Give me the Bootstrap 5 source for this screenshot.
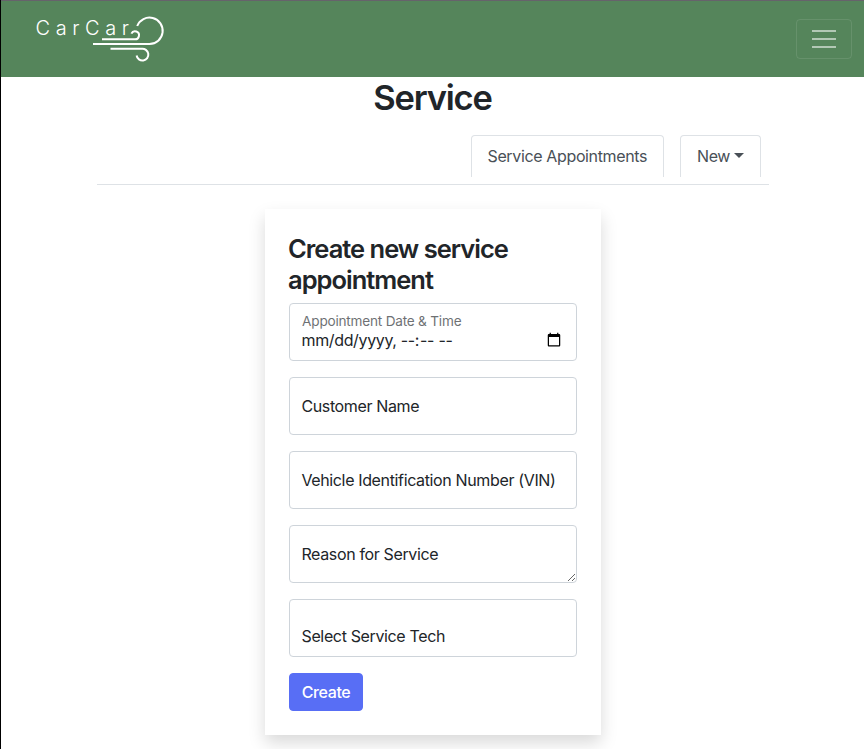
<!DOCTYPE html>
<html lang="en">
<head>
<meta charset="utf-8">
<meta name="viewport" content="width=device-width, initial-scale=1">
<title>CarCar - Service</title>
<link href="https://cdn.jsdelivr.net/npm/bootstrap@5.3.0/dist/css/bootstrap.min.css" rel="stylesheet">
<style>
body{font-family:Inter,Roboto,sans-serif;letter-spacing:-.36px;overflow:hidden;height:749px;border-left:1px solid #000;color:#212529}
.site-bar{background:#55855b;border-top:1px solid #66636b;height:77px;padding:0 12px 0 35px}
.brand-art{display:block}
.brand-art text{font-family:Inter,sans-serif;font-weight:300;font-size:20px;letter-spacing:5.6px}
.site-bar .navbar-toggler{width:56px;height:40px;padding:4px 15px;border-color:rgba(255,255,255,.1);border-radius:4px}
.site-bar .navbar-toggler svg{display:block}
.page-title{font-size:34.500px;line-height:42px;font-weight:600;letter-spacing:-1.200px}
.page-col{width:672px;margin-left:96px}
.service-tabs{border-bottom:1px solid #dee2e6;height:50px;padding-right:8px}
.service-tabs .nav-link{height:42px;border:1px solid #dee2e6;border-bottom:0;border-radius:4px 4px 0 0;color:#495057;padding:8px 15.500px;line-height:25px;white-space:nowrap}
.tab-list{width:193px}
.service-tabs .tab-new{width:81px;padding-left:16px}
.tab-new::after{border-top-width:5px;border-left-width:5px;border-right-width:5px;vertical-align:4px;margin-left:4px}
.form-panel{width:336px;height:526px;margin:24px 0 0 264px;box-shadow:0 8px 16px rgba(0,0,0,.15)}
.form-panel h2{font-size:25.500px;line-height:31px;font-weight:600;letter-spacing:-1px;margin-left:-1px}
.form-panel .form-control,.form-panel .form-select{border-color:#ced4da;border-radius:4px;height:58px;min-height:58px;letter-spacing:inherit;padding-left:11.500px}
.form-panel .form-floating>label{color:#212529;opacity:1;padding-left:11.400px}
.form-panel .form-floating>.date-label{color:#212529;opacity:.65;letter-spacing:-.25px;padding-left:12px}
.form-panel .form-floating>.form-select{background-image:none;padding:26px 12px 10px 11.500px;line-height:20px}
.form-panel textarea{resize:vertical}
.btn-create{--bs-btn-bg:#586ef5;--bs-btn-border-color:#586ef5;--bs-btn-color:#fff;--bs-btn-border-radius:4px;width:74px;font-weight:500;padding-left:0;padding-right:0;letter-spacing:-.4px}
</style>
</head>
<body>
<nav class="site-bar navbar d-flex flex-nowrap justify-content-between align-items-center">
  <a class="text-white text-decoration-none align-self-start" href="#" aria-label="CarCar home">
    <svg class="brand-art" width="130" height="70" viewBox="36 1 130 70" fill="none" stroke="#fff" stroke-width="2">
      <text x="35.500" y="34.500" fill="#fff" stroke="none">CarCar</text>
      <path d="M93 44H149.500A13.200 13.200 0 1 0 137.200 26M102 39.300H134.500A4 4 0 1 0 131.400 33.600M110.500 48.800H141.500A5.900 5.900 0 1 1 136.600 55.500"/>
    </svg>
  </a>
  <button class="navbar-toggler" type="button" aria-label="Toggle navigation">
    <svg width="24" height="30" viewBox="0 0 24 30" stroke="#fff" stroke-opacity=".55" stroke-width="2"><path d="M0 7H24M0 15H24M0 23H24"/></svg>
  </button>
</nav>
<main>
  <h1 class="page-title text-center mb-0">Service</h1>
  <div class="page-col pt-3">
    <ul class="service-tabs nav justify-content-end gap-3">
      <li class="nav-item"><a class="nav-link tab-list" href="#">Service Appointments</a></li>
      <li class="nav-item"><a class="nav-link tab-new dropdown-toggle" href="#">New</a></li>
    </ul>
  </div>
  <section class="form-panel bg-white p-4">
    <h2 class="mb-2">Create new service appointment</h2>
    <form>
      <div class="form-floating mb-3">
        <input class="form-control" type="datetime-local" id="when">
        <label class="date-label" for="when">Appointment Date &amp; Time</label>
      </div>
      <div class="form-floating mb-3">
        <input class="form-control" type="text" id="customer" placeholder=" ">
        <label for="customer">Customer Name</label>
      </div>
      <div class="form-floating mb-3">
        <input class="form-control" type="text" id="vin" placeholder=" ">
        <label for="vin">Vehicle Identification Number (VIN)</label>
      </div>
      <div class="form-floating mb-3">
        <textarea class="form-control" id="reason" placeholder=" "></textarea>
        <label for="reason">Reason for Service</label>
      </div>
      <div class="form-floating mb-3">
        <select class="form-select" aria-label="Service tech"><option>Select Service Tech</option></select>
      </div>
      <button class="btn btn-create" type="button">Create</button>
    </form>
  </section>
</main>
<script src="https://cdn.jsdelivr.net/npm/bootstrap@5.3.0/dist/js/bootstrap.bundle.min.js"></script>
</body>
</html>
